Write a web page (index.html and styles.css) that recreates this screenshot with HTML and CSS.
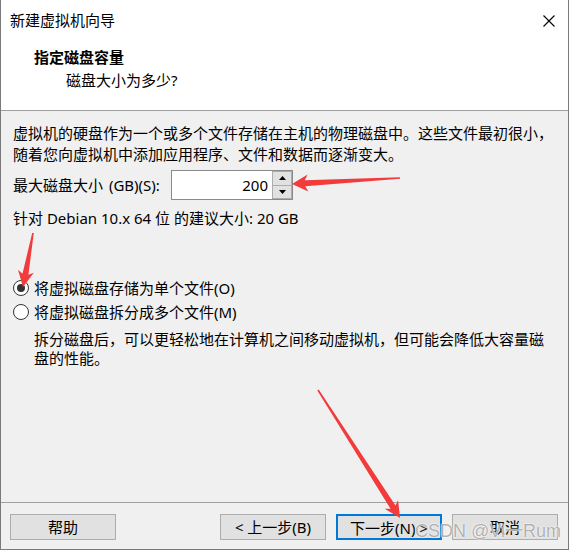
FILE: index.html
```html
<!DOCTYPE html>
<html lang="zh-CN">
<head>
<meta charset="utf-8">
<title>新建虚拟机向导</title>
<link rel="stylesheet" href="styles.css">
</head>
<body>
<div class="window">
  <div class="titlebar">
    <span class="title">新建虚拟机向导</span>
    <svg class="close" width="12" height="12" viewBox="0 0 12 12"><path d="M0.5 0.5 L11.5 11.5 M11.5 0.5 L0.5 11.5" stroke="#000" stroke-width="1.1" fill="none"/></svg>
  </div>
  <div class="header">
    <div class="h-title">指定磁盘容量</div>
    <div class="h-sub">磁盘大小为多少?</div>
  </div>
  <div class="content">
    <p class="intro">虚拟机的硬盘作为一个或多个文件存储在主机的物理磁盘中。这些文件最初很小，<br>随着您向虚拟机中添加应用程序、文件和数据而逐渐变大。</p>
    <div class="size-row">
      <span class="size-label">最大磁盘大小 (GB)(S):</span>
      <div class="spin">
        <span class="spin-value">200</span>
        <div class="spin-buttons">
          <span class="spin-btn"><svg width="7" height="4" viewBox="0 0 7 4"><path d="M0 4 L3.5 0 L7 4 Z" fill="#000"/></svg></span>
          <span class="spin-btn"><svg width="7" height="4" viewBox="0 0 7 4"><path d="M0 0 L7 0 L3.5 4 Z" fill="#000"/></svg></span>
        </div>
      </div>
    </div>
    <p class="note">针对 Debian 10.x 64 位 的建议大小: 20 GB</p>
    <div class="options">
      <div class="radio-row"><span class="radio checked"></span><span>将虚拟磁盘存储为单个文件(O)</span></div>
      <div class="radio-row"><span class="radio"></span><span>将虚拟磁盘拆分成多个文件(M)</span></div>
      <p class="desc">拆分磁盘后，可以更轻松地在计算机之间移动虚拟机，但可能会降低大容量磁<br>盘的性能。</p>
    </div>
  </div>
  <div class="footer">
    <button class="btn">帮助</button>
    <button class="btn push">&lt; 上一步(B)</button>
    <button class="btn default">下一步(N) &gt;</button>
    <button class="btn">取消</button>
  </div>
</div>
<svg class="annotations" width="570" height="551" viewBox="0 0 570 551">
  <polygon points="400,177.2 304.8,180.3 307.6,174.6 292,184 308.4,191.6 305.2,186.3 400,178.8" />
  <polygon points="33.8,233.1 28.4,274.7 33.8,272.8 23,287 18,269.8 22.5,273.7 32.2,232.9" />
  <polygon points="318.7,389.6 395.5,505.5 398.1,500.2 400,518 384.7,508.8 390.5,508.7 317.3,390.4" />
</svg>
<div class="watermark">CSDN @Vi一Rum</div>
</body>
</html>
```

FILE: styles.css
```css
* { box-sizing: border-box; }
html, body { margin: 0; padding: 0; background: #ffffff; }
body {
  font-family: "Noto Sans", "Noto Sans CJK SC", sans-serif;
  font-size: 15px;
  color: #000;
  width: 570px;
  height: 551px;
  position: relative;
  overflow: hidden;
}
.window {
  width: 569px;
  height: 550px;
  border: 1px solid #7a7a7a;
  border-top: none;
  background: #f0f0f0;
  display: flex;
  flex-direction: column;
}
.titlebar {
  height: 40px;
  background: #fff;
  display: flex;
  align-items: center;
  justify-content: space-between;
  padding: 0 13px 0 9px;
  line-height: 20px;
}
.close { display: block; margin-top: 1px; }
.header {
  height: 71px;
  background: #fff;
  border-bottom: 1px solid #a0a0a0;
  padding: 7px 0 0 33px;
  line-height: 21px;
}
.h-title { font-weight: bold; }
.h-sub { padding-left: 32px; margin-top: 2px; }
.content {
  flex: 1;
  padding: 12px 12px 0 12px;
  line-height: 21px;
}
.intro { margin: 0; }
.size-row {
  display: flex;
  align-items: center;
  margin-top: 5px;
  height: 30px;
}
.size-label { width: 158px; word-spacing: 2px; }
.spin {
  width: 122px;
  height: 30px;
  border: 1px solid #8a8a8a;
  background: #fff;
  display: flex;
  align-items: stretch;
}
.spin-value {
  flex: 1;
  text-align: right;
  padding-right: 4px;
  line-height: 28px;
}
.spin-buttons {
  width: 20px;
  display: flex;
  flex-direction: column;
}
.spin-btn {
  flex: 1;
  background: #e1e1e1;
  border: 1px solid #adadad;
  display: flex;
  align-items: center;
  justify-content: center;
}
.spin-btn + .spin-btn { border-top: none; }
.spin-btn svg { display: block; }
.note { margin: 8px 0 0 0; }
.options { margin-top: 47px; }
.radio-row {
  display: flex;
  align-items: center;
  height: 24px;
  gap: 5px;
}
.radio {
  width: 16px;
  height: 16px;
  border: 1px solid #333;
  border-radius: 50%;
  background: #fff;
  position: relative;
  flex: none;
}
.radio.checked::after {
  content: "";
  position: absolute;
  left: 3px;
  top: 3px;
  width: 8px;
  height: 8px;
  border-radius: 50%;
  background: #333;
}
.desc { margin: 6px 0 0 21px; line-height: 19px; }
.footer {
  height: 47px;
  border-top: 1px solid #a0a0a0;
  padding: 11px 10px 0 9px;
  display: flex;
  align-items: flex-start;
  gap: 10px;
}
.btn {
  width: 106px;
  height: 26px;
  border: 1px solid #adadad;
  background: #e1e1e1;
  font-family: inherit;
  font-size: 15px;
  color: #000;
  padding: 0;
  line-height: 24px;
}
.btn.push { margin-left: auto; }
.btn.default { border: 2px solid #0078d7; }
.annotations {
  position: absolute;
  left: 0;
  top: 0;
  pointer-events: none;
  fill: #f23b3b;
}
.watermark {
  position: absolute;
  left: 415px;
  top: 520px;
  font-family: "Liberation Sans", sans-serif;
  font-size: 18px;
  line-height: 22px;
  color: rgba(110, 110, 110, 0.55);
  text-shadow: 0 0 1px #fff, 0 0 2px #fff;
  pointer-events: none;
}
```
